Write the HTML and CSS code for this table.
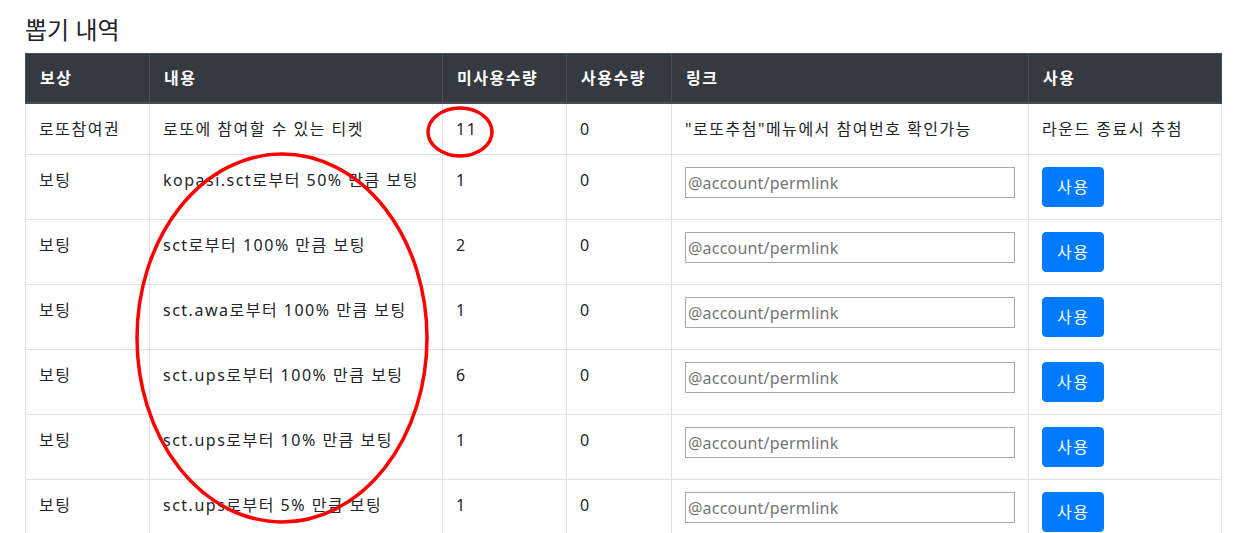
FILE: index.html
```html
<!DOCTYPE html>
<html lang="ko">
<head>
    <meta charset="UTF-8">
    <meta name="viewport" content="width=device-width, initial-scale=1.0">
    <title>뽑기 내역</title>
    <link rel="stylesheet" href="styles.css">
</head>
<body>

<div class="page">
    <h4 class="title">뽑기 내역</h4>

    <table class="draw-table">
        <colgroup>
            <col class="c-reward">
            <col class="c-desc">
            <col class="c-unused">
            <col class="c-used">
            <col class="c-link">
            <col class="c-use">
        </colgroup>
        <thead>
            <tr>
                <th>보상</th>
                <th>내용</th>
                <th>미사용수량</th>
                <th>사용수량</th>
                <th>링크</th>
                <th>사용</th>
            </tr>
        </thead>
        <tbody>
            <tr class="text-row">
                <td>로또참여권</td>
                <td>로또에 참여할 수 있는 티켓</td>
                <td>11</td>
                <td>0</td>
                <td>"로또추첨"메뉴에서 참여번호 확인가능</td>
                <td>라운드 종료시 추첨</td>
            </tr>
            <tr>
                <td>보팅</td>
                <td>kopasi.sct로부터 50% 만큼 보팅</td>
                <td>1</td>
                <td>0</td>
                <td><input type="text" class="link-input" placeholder="@account/permlink"></td>
                <td><button class="use-btn">사용</button></td>
            </tr>
            <tr>
                <td>보팅</td>
                <td>sct로부터 100% 만큼 보팅</td>
                <td>2</td>
                <td>0</td>
                <td><input type="text" class="link-input" placeholder="@account/permlink"></td>
                <td><button class="use-btn">사용</button></td>
            </tr>
            <tr>
                <td>보팅</td>
                <td>sct.awa로부터 100% 만큼 보팅</td>
                <td>1</td>
                <td>0</td>
                <td><input type="text" class="link-input" placeholder="@account/permlink"></td>
                <td><button class="use-btn">사용</button></td>
            </tr>
            <tr>
                <td>보팅</td>
                <td>sct.ups로부터 100% 만큼 보팅</td>
                <td>6</td>
                <td>0</td>
                <td><input type="text" class="link-input" placeholder="@account/permlink"></td>
                <td><button class="use-btn">사용</button></td>
            </tr>
            <tr>
                <td>보팅</td>
                <td>sct.ups로부터 10% 만큼 보팅</td>
                <td>1</td>
                <td>0</td>
                <td><input type="text" class="link-input" placeholder="@account/permlink"></td>
                <td><button class="use-btn">사용</button></td>
            </tr>
            <tr>
                <td>보팅</td>
                <td>sct.ups로부터 5% 만큼 보팅</td>
                <td>1</td>
                <td>0</td>
                <td><input type="text" class="link-input" placeholder="@account/permlink"></td>
                <td><button class="use-btn">사용</button></td>
            </tr>
        </tbody>
    </table>
</div>

<!-- red marks drawn over the screenshot -->
<svg class="marks" width="1236" height="533" viewBox="0 0 1236 533">
    <ellipse cx="460" cy="132" rx="32" ry="24" fill="none" stroke="#f00" stroke-width="3.5"/>
    <ellipse cx="282" cy="338" rx="145" ry="184" fill="none" stroke="#f00" stroke-width="3.5"/>
</svg>

</body>
</html>
```

FILE: styles.css
```css
html {
    overflow: hidden;
}
body {
    margin: 0;
    font-family: "Noto Sans", "Noto Sans CJK KR", sans-serif;
    font-size: 16px;
    color: #212529;
    background: #fff;
    position: relative;
}
.page {
    width: 1196px;
    margin-left: 25px;
    padding-top: 14px;
}
.title {
    margin: 0 0 8px 0;
    font-size: 24px;
    font-weight: 400;
    line-height: 31px;
}
.draw-table {
    width: 100%;
    border-collapse: collapse;
    table-layout: fixed;
    letter-spacing: 1.5px;
}
.c-reward { width: 124px; }
.c-desc { width: 293px; }
.c-unused { width: 124px; }
.c-used { width: 105px; }
.c-link { width: 357px; }
.c-use { width: 193px; }

.draw-table th {
    background: #343a40;
    color: #fff;
    font-weight: 700;
    text-align: left;
    padding: 12px 14px 12px 14px;
    line-height: 24px;
    border: 1px solid #454d55;
    border-bottom-width: 2px;
}
.draw-table td {
    padding: 13px 13px 12px 13px;
    line-height: 25px;
    vertical-align: top;
    border: 1px solid #dee2e6;
    white-space: nowrap;
}
.link-input {
    box-sizing: border-box;
    width: 330px;
    height: 31px;
    margin: -1px 0 0 0;
    padding: 1px 2px;
    border: 1px solid #a9a9a9;
    font-family: inherit;
    font-size: 16px;
    letter-spacing: 0.2px;
    color: #212529;
    vertical-align: top;
}
.link-input::placeholder {
    color: #757575;
}
.use-btn {
    display: block;
    height: 40px;
    margin-top: -1px;
    padding: 7px 14px;
    background: #007bff;
    color: #fff;
    border: 1px solid #007bff;
    border-radius: 4px;
    font-family: inherit;
    font-size: 16px;
    line-height: 24px;
    letter-spacing: 1.5px;
    cursor: pointer;
}
.marks {
    position: absolute;
    top: 0;
    left: 0;
    pointer-events: none;
}
```
